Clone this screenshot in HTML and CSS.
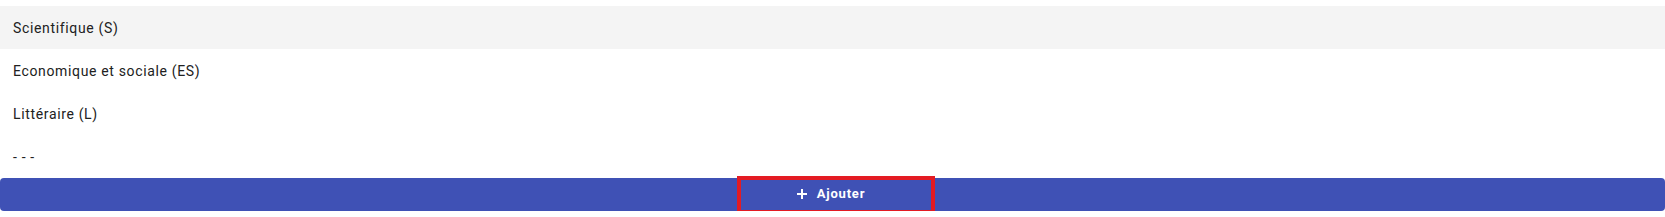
FILE: index.html
```html
<!DOCTYPE html>
<html lang="fr">
<head>
    <meta charset="UTF-8">
    <title>Séries</title>
    <link rel="stylesheet" href="styles.css">
</head>
<body>
    <div class="options">
        <div class="option active">Scientifique (S)</div>
        <div class="option">Economique et sociale (ES)</div>
        <div class="option">Littéraire (L)</div>
        <div class="option">- - -</div>
    </div>
    <button class="add-btn">
        <svg class="plus" width="10" height="10" viewBox="0 0 10 10">
            <path d="M5 0v10M0 5h10" stroke="#fff" stroke-width="2"/>
        </svg>
        <span>Ajouter</span>
        <span class="highlight"></span>
    </button>
</body>
</html>
```

FILE: styles.css
```css
body {
    margin: 0;
    padding-top: 6px;
    background: #fff;
    font-family: Roboto, "Liberation Sans", sans-serif;
}
.options {
    display: flex;
    flex-direction: column;
}
.option {
    height: 43px;
    display: flex;
    align-items: center;
    padding-left: 13px;
    font-size: 14px;
    letter-spacing: 0.65px;
    color: #212121;
}
.option.active {
    background: #f4f4f4;
}
.add-btn {
    position: relative;
    display: flex;
    align-items: center;
    justify-content: center;
    gap: 10px;
    width: 100%;
    height: 33px;
    padding: 0 0 2px 0;
    border: none;
    border-radius: 4px;
    background: #3f51b5;
    color: #fff;
    font-family: Roboto, "Liberation Sans", sans-serif;
    font-size: 13px;
    font-weight: 700;
    letter-spacing: 0.8px;
    cursor: pointer;
}
.plus {
    margin-top: 1px;
    margin-left: -3px;
}
.highlight {
    position: absolute;
    left: 737px;
    top: -2px;
    width: 190px;
    height: 30px;
    border: 4px solid #e31b23;
}
```
